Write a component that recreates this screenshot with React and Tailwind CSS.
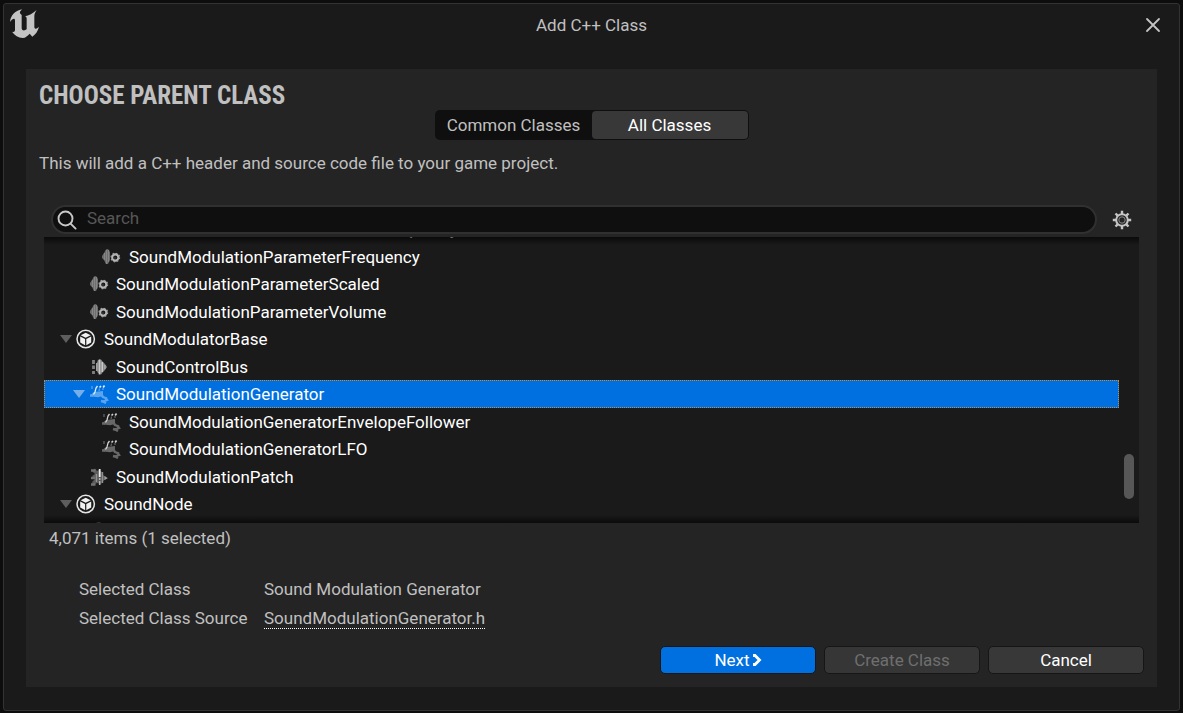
import React, { useState } from "react";

const rows = [
  { name: "SoundModulationParameterFilterFrequency", level: 2, icon: "param" },
  { name: "SoundModulationParameterFrequency", level: 2, icon: "param" },
  { name: "SoundModulationParameterScaled", level: 1, icon: "param" },
  { name: "SoundModulationParameterVolume", level: 1, icon: "param" },
  { name: "SoundModulatorBase", level: 0, icon: "class", open: true },
  { name: "SoundControlBus", level: 1, icon: "bus" },
  { name: "SoundModulationGenerator", level: 1, icon: "generator", open: true },
  { name: "SoundModulationGeneratorEnvelopeFollower", level: 2, icon: "generator" },
  { name: "SoundModulationGeneratorLFO", level: 2, icon: "generator" },
  { name: "SoundModulationPatch", level: 1, icon: "patch" },
  { name: "SoundNode", level: 0, icon: "class", open: true },
  { name: "", level: 1, icon: "class" },
];

const indents = ["pl-[15px]", "pl-7", "pl-10"];
const iconGaps = ["mr-2", "mr-[7px]", "mr-2"];

function UnrealLogo() {
  return (
    <svg className="h-[30px] w-[30px]" viewBox="0 0 90 90" fill="#c4c4c4" aria-hidden="true">
      <path d="M0 39C2 20 14 5 36 1C30 7 28 11 31 14L35 18V58C36 66 44 66 50 61V29C50 25 48 23 45 22C56 20 69 13 80 3C76 9 73 14 73 22V54C74 61 78 61 87 53C83 67 77 76 67 83L59 74C53 79 47 87 38 87C25 86 14 79 6 68C11 70 15 68 15 62V35C15 26 8 28 0 39Z" />
    </svg>
  );
}

function ClassIcon() {
  return (
    <svg className="h-5 w-5" viewBox="0 0 20 20" aria-hidden="true">
      <circle cx="9.7" cy="10" r="8.7" fill="none" stroke="#e6e6e6" strokeWidth="1.5" />
      <g fill="#f2f2f2">
        <path d="M9.7 3.8L14.7 6.3L9.7 8.8L4.7 6.3Z" />
        <path d="M4.2 7.4L9.1 10V16.2L4.2 13.4Z" />
        <path d="M15.2 7.4L10.3 10V16.2L15.2 13.4Z" />
      </g>
    </svg>
  );
}

function ParamIcon() {
  return (
    <svg className="h-5 w-5" viewBox="0 0 20 20" aria-hidden="true">
      <path d="M1 9L3 6L5 2.5L7 2L9 5V13L7 17L5 17L3 13L1 11Z" fill="#6a6a6a" />
      <path d="M5.5 3V17M3.5 6V13M7.5 3V15" stroke="#858585" strokeWidth="1.2" />
      <circle cx="14.3" cy="10.5" r="3.1" fill="none" stroke="#b8b8b8" strokeWidth="2.1" />
      <circle cx="14.3" cy="10.5" r="4.2" fill="none" stroke="#a0a0a0" strokeWidth="1.4" strokeDasharray="1.6 1.7" />
      <circle cx="13.8" cy="11" r="1.3" fill="#303030" />
    </svg>
  );
}

function BusIcon() {
  return (
    <svg className="h-5 w-5" viewBox="0 0 20 20" aria-hidden="true">
      <path d="M7 8L9 3L12 2.5L14 5L16 7L18 10L16 13L14 15L12 17.5L9 16L7 12Z" fill="#858585" />
      <path d="M10.5 2.5V17.5M13.3 5V15" stroke="#c8c8c8" strokeWidth="1.6" />
      <path d="M7.8 6V14M15.8 8V12" stroke="#a6a6a6" strokeWidth="1.4" />
      <path d="M4.5 3V7M4.5 8.5V12M4.5 14V17" stroke="#808080" strokeWidth="2.8" />
    </svg>
  );
}

function GeneratorIcon({ selected }) {
  const dim = selected ? "#5aa5ee" : "#686868";
  const bright = selected ? "#e2f0fd" : "#d2d2d2";
  return (
    <svg className="h-5 w-5" viewBox="0 0 20 20" fill="none" aria-hidden="true">
      <path d="M2 10.5L5 8L14 7V12L9 13.2L3 12.5Z" fill={dim} />
      <path d="M1 11.5H4M12 10L14 13L18 14.5M12 17L14 17.5L17 19" stroke={dim} strokeWidth="2.4" />
      <path d="M16.5 14L18 16L14 17.5" stroke={dim} strokeWidth="2.4" />
      <path d="M4.5 10.5L6 8L7 4L8.5 2" stroke={bright} strokeWidth="1.3" />
      <path d="M10.5 3.5L12 2M14.2 3.5L15.5 1.5" stroke={bright} strokeWidth="1.6" />
      <path d="M3 2V5M10.5 4.5L10 7M14 4V6" stroke={dim} strokeWidth="1.2" />
    </svg>
  );
}

function PatchIcon() {
  return (
    <svg className="h-5 w-5" viewBox="0 0 20 20" aria-hidden="true">
      <path d="M3 4L6 1.5L8 4L10 3L13 5L14 8L19 11L14 14L12 17L8 16L4 18L3 15L6 12L3 9L6 7Z" fill="#5c5c5c" />
      <path d="M2 3.5H6.5M2 11H6M2 17.5H6.5" stroke="#727272" strokeWidth="2.4" />
      <path d="M13.5 5V16M7.5 7V15" stroke="#929292" strokeWidth="1.4" />
      <path d="M10.7 2V10" stroke="#eeeeee" strokeWidth="1.8" />
      <path d="M10.7 11V13M10.7 14V18" stroke="#b4b4b4" strokeWidth="1.5" />
      <path d="M15.5 9L18.5 11.2L15.5 13Z" fill="#a0a0a0" />
    </svg>
  );
}

function RowIcon({ kind, selected }) {
  if (kind === "param") return <ParamIcon />;
  if (kind === "bus") return <BusIcon />;
  if (kind === "generator") return <GeneratorIcon selected={selected} />;
  if (kind === "patch") return <PatchIcon />;
  return <ClassIcon />;
}

function TreeRow({ row, selected, onSelect }) {
  return (
    <li
      role="treeitem"
      aria-selected={selected}
      aria-expanded={row.open}
      aria-level={row.level + 1}
      onClick={onSelect}
      className={`flex min-h-0 items-center border border-dotted pt-px ${indents[row.level]} ${
        selected ? "border-[#c98a35] bg-[#0070e0]" : "border-transparent"
      }`}
    >
      <span className="-ml-px mr-[3px] flex w-3.5 shrink-0 justify-center">
        {row.open && (
          <svg className="h-2 w-3.5" viewBox="0 0 14 8" aria-hidden="true">
            <path d="M1 0H13L7 8Z" fill={selected ? "#76afe8" : "#5e5e5e"} />
          </svg>
        )}
      </span>
      <span className={`shrink-0 ${iconGaps[row.level]}`}>
        <RowIcon kind={row.icon} selected={selected} />
      </span>
      <span className="whitespace-nowrap text-white">{row.name}</span>
    </li>
  );
}

function GearIcon() {
  return (
    <svg className="h-5 w-5" viewBox="0 0 20 20" fill="none" stroke="#c6c6c6" aria-hidden="true">
      <circle cx="10" cy="10" r="5.8" strokeWidth="2" />
      <circle cx="10" cy="10" r="3.2" stroke="#8c8c8c" strokeWidth="1" />
      <path
        d="M10 .8V4M10 16V19.2M.8 10H4M16 10H19.2M3.5 3.5L5.7 5.7M14.3 14.3L16.5 16.5M3.5 16.5L5.7 14.3M14.3 5.7L16.5 3.5"
        strokeWidth="2.4"
      />
    </svg>
  );
}

const buttonBase = "flex h-7 w-39 items-center justify-center rounded-[5px] border border-[#161616]";

export default function App() {
  const [tab, setTab] = useState("all");
  const [selected, setSelected] = useState("SoundModulationGenerator");

  return (
    <div className="flex min-h-screen bg-[#0d0d0d] p-[3px] pb-0.5 font-['Roboto',sans-serif] text-[17px] leading-6 text-[#c0c0c0]">
      <div className="flex min-w-0 flex-1 flex-col rounded-[3px] border border-[#333333] bg-[#1a1a1a]">
        <header className="grid h-[65px] grid-cols-[1fr_auto_1fr] items-start pt-[5px]">
          <div className="pl-1.5">
            <UnrealLogo />
          </div>
          <h1 className="pt-1">Add C++ Class</h1>
          <button type="button" aria-label="Close" className="mt-2 mr-[18px] justify-self-end">
            <svg className="h-4 w-4" viewBox="0 0 16 16" stroke="#c4c4c4" strokeWidth="1.8" strokeLinecap="round" aria-hidden="true">
              <path d="M2 2L14 14M14 2L2 14" />
            </svg>
          </button>
        </header>

        <main className="mx-[22px] mb-[23px] flex flex-1 flex-col bg-[#242424] pt-[13px] pb-[13px]">
          <h2 className="px-[13px] font-['Roboto_Condensed',sans-serif] text-[25px] leading-[27px] font-bold">
            CHOOSE PARENT CLASS
          </h2>

          <div className="mt-px flex h-[30px] self-center rounded-[5px] bg-[#0f0f0f] p-px">
            <button
              type="button"
              aria-pressed={tab === "common"}
              onClick={() => setTab("common")}
              className={`w-39 rounded-[4px] ${tab === "common" ? "bg-[#383838] text-white" : ""}`}
            >
              Common Classes
            </button>
            <button
              type="button"
              aria-pressed={tab === "all"}
              onClick={() => setTab("all")}
              className={`w-39 rounded-[4px] ${tab === "all" ? "bg-[#383838] text-white" : ""}`}
            >
              All Classes
            </button>
          </div>

          <p className="mt-[11px] px-[13px]">This will add a C++ header and source code file to your game project.</p>

          <div className="mt-[30px] mr-[18px] ml-[25px] flex items-center">
            <label className="flex h-[29px] flex-1 items-center rounded-full border-2 border-[#303030] bg-[#0f0f0f] pr-4 pl-1">
              <svg className="h-5 w-5 shrink-0" viewBox="0 0 20 20" fill="none" stroke="#c8c8c8" strokeWidth="1.9" strokeLinecap="round" aria-hidden="true">
                <circle cx="8.5" cy="8.5" r="7" />
                <path d="M13.6 13.6L18.6 18.6" />
              </svg>
              <input
                type="text"
                aria-label="Search"
                placeholder="Search"
                className="ml-[10px] min-w-0 flex-1 bg-transparent pb-[3px] outline-none placeholder:text-[#575757]"
              />
            </label>
            <button type="button" aria-label="Settings" className="mr-[7px] ml-[15px]">
              <GearIcon />
            </button>
          </div>

          <div className="relative mx-[18px] mt-[3px] flex h-[286px] overflow-hidden bg-[#1a1a1a]">
            <ul role="tree" aria-label="Classes" className="-mt-[22px] grid h-[330px] flex-1 grid-rows-12">
              {rows.map((row) => (
                <TreeRow
                  key={row.name || "next"}
                  row={row}
                  selected={row.name === selected}
                  onSelect={() => row.name && setSelected(row.name)}
                />
              ))}
            </ul>
            <div className="flex w-5 justify-center pt-[217px]">
              <div className="h-[45px] w-2.5 rounded-full bg-[#575757]" />
            </div>
            <div className="pointer-events-none absolute inset-x-0 top-0 h-2 bg-linear-to-b from-black/60 to-transparent" />
            <div className="pointer-events-none absolute inset-x-0 bottom-0 h-2 bg-linear-to-t from-black/60 to-transparent" />
          </div>

          <p className="mt-[3px] px-[23px]">4,071 items (1 selected)</p>

          <dl className="mt-[27px] grid grid-cols-[185px_1fr] gap-y-[5px] px-[53px]">
            <dt>Selected Class</dt>
            <dd>Sound Modulation Generator</dd>
            <dt>Selected Class Source</dt>
            <dd>
              <a href="#source" className="border-b border-dotted border-white">
                SoundModulationGenerator.h
              </a>
            </dd>
          </dl>

          <div className="mt-auto flex justify-end gap-2 pr-[13px]">
            <button type="button" className={`${buttonBase} bg-[#0070e0] text-white`}>
              Next
              <svg className="ml-0.5 h-3 w-2.5" viewBox="0 0 10 12" fill="none" stroke="#ffffff" strokeWidth="2.8" aria-hidden="true">
                <path d="M1 1.5L3 1.5L7.5 6L3 10.5L1 10.5" />
              </svg>
            </button>
            <button type="button" disabled className={`${buttonBase} bg-[#363636] text-[#6f6f6f]`}>
              Create Class
            </button>
            <button type="button" className={`${buttonBase} bg-[#383838] text-white`}>
              Cancel
            </button>
          </div>
        </main>
      </div>
    </div>
  );
}
